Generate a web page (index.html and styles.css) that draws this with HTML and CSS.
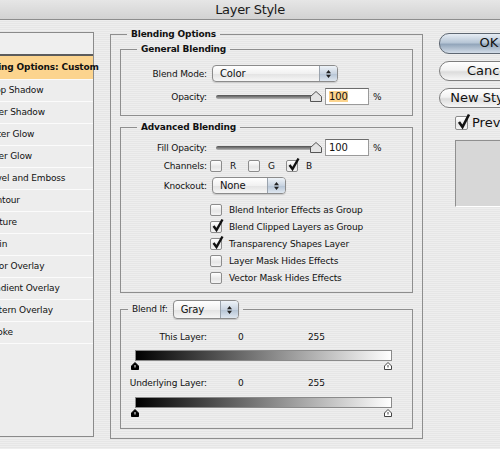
FILE: index.html
```html
<!DOCTYPE html>
<html lang="en">
<head>
    <meta charset="UTF-8">
    <meta name="viewport" content="width=device-width, initial-scale=1.0">
    <title>Layer Style</title>
    <link rel="stylesheet" href="styles.css">
</head>
<body>
    <div class="titlebar">Layer Style</div>
    <div class="dialog">
        <div class="styles-list">
            <div class="row head">Styles</div>
            <div class="row selected">Blending Options: Custom</div>
            <div class="row">Drop Shadow</div>
            <div class="row">Inner Shadow</div>
            <div class="row">Outer Glow</div>
            <div class="row">Inner Glow</div>
            <div class="row">Bevel and Emboss</div>
            <div class="row">Contour</div>
            <div class="row">Texture</div>
            <div class="row">Satin</div>
            <div class="row">Color Overlay</div>
            <div class="row">Gradient Overlay</div>
            <div class="row">Pattern Overlay</div>
            <div class="row">Stroke</div>
        </div>

        <fieldset class="group outer">
            <legend>Blending Options</legend>

            <fieldset class="group general">
                <legend>General Blending</legend>
                <div class="field">
                    <span class="label">Blend Mode:</span>
                    <div class="popup mode">
                        <span class="value">Color</span>
                        <span class="arrows"><svg width="7" height="10" viewBox="0 0 7 10"><path d="M1 4.2 L3.5 1 L6 4.2Z M1 5.8 L3.5 9 L6 5.8Z" fill="#222"/></svg></span>
                    </div>
                </div>
                <div class="field">
                    <span class="label">Opacity:</span>
                    <div class="slider">
                        <div class="track"></div>
                        <svg class="thumb" width="12" height="11" viewBox="0 0 12 11"><path d="M0.5 10.5 V5.5 L6 0.5 L11.5 5.5 V10.5 Z" fill="#e4e4e4" stroke="#555"/></svg>
                    </div>
                    <div class="numbox"><span class="hilite">100</span></div>
                    <span class="unit">%</span>
                </div>
            </fieldset>

            <fieldset class="group advanced">
                <legend>Advanced Blending</legend>
                <div class="field">
                    <span class="label">Fill Opacity:</span>
                    <div class="slider">
                        <div class="track"></div>
                        <svg class="thumb" width="12" height="11" viewBox="0 0 12 11"><path d="M0.5 10.5 V5.5 L6 0.5 L11.5 5.5 V10.5 Z" fill="#e4e4e4" stroke="#555"/></svg>
                    </div>
                    <div class="numbox">100</div>
                    <span class="unit">%</span>
                </div>
                <div class="field channels">
                    <span class="label">Channels:</span>
                    <span class="check"></span><span class="chan">R</span>
                    <span class="check"></span><span class="chan">G</span>
                    <span class="check on"><svg width="13" height="15" viewBox="0 0 13 15"><path d="M2.5 8 L5.5 12 L11.5 1.5" fill="none" stroke="#111" stroke-width="2.4"/></svg></span><span class="chan">B</span>
                </div>
                <div class="field">
                    <span class="label">Knockout:</span>
                    <div class="popup knockout">
                        <span class="value">None</span>
                        <span class="arrows"><svg width="7" height="10" viewBox="0 0 7 10"><path d="M1 4.2 L3.5 1 L6 4.2Z M1 5.8 L3.5 9 L6 5.8Z" fill="#222"/></svg></span>
                    </div>
                </div>
                <div class="options">
                    <div class="option"><span class="check"></span>Blend Interior Effects as Group</div>
                    <div class="option"><span class="check on"><svg width="13" height="15" viewBox="0 0 13 15"><path d="M2.5 8 L5.5 12 L11.5 1.5" fill="none" stroke="#111" stroke-width="2.4"/></svg></span>Blend Clipped Layers as Group</div>
                    <div class="option"><span class="check on"><svg width="13" height="15" viewBox="0 0 13 15"><path d="M2.5 8 L5.5 12 L11.5 1.5" fill="none" stroke="#111" stroke-width="2.4"/></svg></span>Transparency Shapes Layer</div>
                    <div class="option"><span class="check"></span>Layer Mask Hides Effects</div>
                    <div class="option"><span class="check"></span>Vector Mask Hides Effects</div>
                </div>
            </fieldset>

            <fieldset class="group blendif">
                <legend>
                    <span class="legend-label">Blend If:</span>
                    <div class="popup gray">
                        <span class="value">Gray</span>
                        <span class="arrows"><svg width="7" height="10" viewBox="0 0 7 10"><path d="M1 4.2 L3.5 1 L6 4.2Z M1 5.8 L3.5 9 L6 5.8Z" fill="#222"/></svg></span>
                    </div>
                </legend>
                <div class="range-head">
                    <span class="label">This Layer:</span>
                    <span class="lo">0</span>
                    <span class="hi">255</span>
                </div>
                <div class="ramp"></div>
                <div class="markers">
                    <svg width="8" height="8" viewBox="0 0 8 8"><path d="M0.5 7.5 V4 L4 0.5 L7.5 4 V7.5 Z" fill="#000" stroke="#000"/><path d="M4 3 V5.5" stroke="#fff"/></svg>
                    <svg width="10" height="8" viewBox="0 0 10 8"><path d="M1.5 7.5 V4 L5 0.5 L8.5 4 V7.5 Z" fill="#fff" stroke="#444"/><path d="M5 3 V5.5" stroke="#444"/></svg>
                </div>
                <div class="range-head second">
                    <span class="label">Underlying Layer:</span>
                    <span class="lo">0</span>
                    <span class="hi">255</span>
                </div>
                <div class="ramp lower"></div>
                <div class="markers">
                    <svg width="8" height="8" viewBox="0 0 8 8"><path d="M0.5 7.5 V4 L4 0.5 L7.5 4 V7.5 Z" fill="#000" stroke="#000"/><path d="M4 3 V5.5" stroke="#fff"/></svg>
                    <svg width="10" height="8" viewBox="0 0 10 8"><path d="M1.5 7.5 V4 L5 0.5 L8.5 4 V7.5 Z" fill="#fff" stroke="#444"/><path d="M5 3 V5.5" stroke="#444"/></svg>
                </div>
            </fieldset>
        </fieldset>

        <div class="actions">
            <div class="btn default">OK</div>
            <div class="btn">Cancel</div>
            <div class="btn">New Style...</div>
            <div class="preview-toggle">
                <span class="check big on"><svg width="15" height="17" viewBox="0 0 15 17"><path d="M3 9 L6.5 14 L13 1.5" fill="none" stroke="#111" stroke-width="2.6"/></svg></span>
                Preview
            </div>
            <div class="swatch"></div>
        </div>
    </div>
</body>
</html>
```

FILE: styles.css
```css
body {
    margin: 0px;
    width: 500px;
    height: 449px;
    overflow: hidden;
    font-family: "DejaVu Sans", sans-serif;
    font-size: 9px;
    letter-spacing: -0.15px;
    color: #111;
    background: repeating-linear-gradient(to bottom, #eeeeee 0px, #eeeeee 1px, #e6e6e6 1px, #e6e6e6 2px);
}
.titlebar {
    height: 19px;
    line-height: 19px;
    text-align: center;
    font-size: 13px;
    letter-spacing: -0.3px;
    color: #1a1a1a;
    background: linear-gradient(#e6e6e6, #d2d2d2);
    border-bottom: 1px solid #8d8d8d;
}
.dialog {
    display: flex;
    align-items: flex-start;
    padding-top: 9px;
}

/* left list of styles */
.styles-list {
    flex-shrink: 0;
    box-sizing: border-box;
    width: 134px;
    height: 405px;
    margin: 3px 0px 0px -40px;
    border: 1px solid #8a8a8a;
    background-color: #ededed;
}
.row {
    box-sizing: border-box;
    height: 22px;
    line-height: 21px;
    padding-left: 24px;
    border-bottom: 1px solid #fbfbfb;
    white-space: nowrap;
}
.row.head {
    height: 23px;
    color: transparent;
    background-color: #efefef;
    border-bottom: 2px solid #5c5c5c;
}
.row.selected {
    height: 24px;
    line-height: 23px;
    padding-left: 9px;
    font-weight: bold;
    background-color: #fcd48e;
}

/* fieldsets */
fieldset.group {
    margin: 0px;
    min-width: 0px;
    border: 1px solid #8e8e8e;
}
fieldset.group legend {
    padding: 0px 4px;
    line-height: 11px;
    font-weight: bold;
}
.outer {
    flex-shrink: 0;
    box-sizing: border-box;
    width: 313px;
    margin-left: 16px !important;
    padding: 4px 9px 9px;
}
.outer > legend {
    margin-left: 7px;
}
.general, .advanced {
    padding: 10px 0px 10px;
}
.general > legend, .advanced > legend {
    margin-left: 16px;
}
.general .field + .field {
    margin-top: 6px;
}
.advanced {
    margin-top: 6px !important;
    padding: 6px 0px 6px;
}
.field {
    display: flex;
    align-items: center;
    height: 17px;
}
.label {
    flex-shrink: 0;
    width: 86px;
    text-align: right;
    white-space: nowrap;
}

/* popup menus */
.popup {
    display: flex;
    box-sizing: border-box;
    height: 17px;
    margin-left: 5px;
    border: 1px solid #8b8b8b;
    border-radius: 4px;
    background: linear-gradient(#ffffff, #f1f1f1 50%, #e2e2e2 51%, #f6f6f6);
    box-shadow: 0px 1px 1px rgba(0, 0, 0, 0.15);
    overflow: hidden;
}
.popup .value {
    flex: 1;
    padding-left: 7px;
    line-height: 15px;
    font-size: 10px;
}
.popup .arrows {
    display: flex;
    align-items: center;
    justify-content: center;
    width: 17px;
    border-left: 1px solid #9aa3ad;
    background: linear-gradient(#eef3f8, #c9d4e1 50%, #b4c3d4 51%, #dfe7f0);
}
.popup.mode {
    width: 126px;
}
.popup.knockout {
    width: 74px;
}

/* sliders and number boxes */
.slider {
    position: relative;
    flex-shrink: 0;
    width: 106px;
    height: 17px;
    margin-left: 9px;
}
.track {
    position: absolute;
    left: 0px;
    right: 4px;
    top: 7px;
    height: 4px;
    border-radius: 2px;
    background: linear-gradient(#505050, #8a8a8a 60%, #b8b8b8);
}
.thumb {
    position: absolute;
    right: 0px;
    top: 3px;
}
.numbox {
    box-sizing: border-box;
    width: 44px;
    height: 17px;
    margin-left: 3px;
    padding-left: 3px;
    line-height: 15px;
    font-size: 10px;
    background-color: #ffffff;
    border: 1px solid #9a9a9a;
    border-top-color: #6c6c6c;
}
.hilite {
    background-color: #fcd48e;
}
.unit {
    margin-left: 4px;
}

/* checkboxes */
.check {
    position: relative;
    flex-shrink: 0;
    box-sizing: border-box;
    width: 12px;
    height: 12px;
    border: 1px solid #8c8c8c;
    border-radius: 2px;
    background: linear-gradient(#ffffff, #e6e6e6 60%, #f4f4f4);
}
.check svg {
    position: absolute;
    left: 0px;
    top: -4px;
}
.channels {
    height: 19px;
}
.channels .check {
    margin-left: 3px;
}
.chan {
    width: 23px;
    padding-left: 8px;
    box-sizing: border-box;
}
.advanced .field + .field {
    margin-top: 0px;
}
.advanced .field:nth-of-type(3) {
    margin-top: 2px;
}
.options {
    margin-top: 7px;
    padding-left: 89px;
}
.option {
    display: flex;
    align-items: center;
    height: 17px;
    white-space: nowrap;
}
.option .check {
    margin-right: 7px;
}

/* blend if */
.blendif {
    margin-top: 7px !important;
    padding: 12px 0px 11px;
}
.blendif > legend {
    display: flex;
    align-items: center;
    margin-left: 7px;
    font-weight: normal !important;
    line-height: 19px !important;
}
.popup.gray {
    width: 66px;
    height: 19px;
}
.popup.gray .value {
    line-height: 17px;
}
.range-head {
    display: flex;
    height: 12px;
    line-height: 12px;
}
.range-head .lo {
    margin-left: 31px;
    width: 70px;
}
.range-head.second {
    margin-top: 7px;
}
.ramp {
    box-sizing: border-box;
    width: 257px;
    height: 11px;
    margin: 7px 0px 0px 14px;
    border: 1px solid #8a8a8a;
    background: linear-gradient(to right, #000000, #ffffff);
}
.ramp.lower {
    margin-top: 8px;
}
.markers {
    display: flex;
    justify-content: space-between;
    width: 262px;
    height: 8px;
    margin: 1px 0px 0px 10px;
}

/* right column */
.actions {
    flex-shrink: 0;
    width: 110px;
    margin-left: 16px;
    padding-top: 4px;
}
.btn {
    box-sizing: border-box;
    width: 100px;
    height: 20px;
    margin-bottom: 7px;
    line-height: 18px;
    text-align: center;
    font-size: 13px;
    letter-spacing: 0px;
    border: 1px solid #7e7e7e;
    border-radius: 10px;
    background: linear-gradient(#ffffff, #f2f2f2 45%, #dcdcdc 55%, #f7f7f7);
}
.btn.default {
    height: 21px;
    border-color: #5e6772;
    background: linear-gradient(#e6edf4, #b7c6d6 45%, #93a6bb 55%, #d3dde8);
}
.preview-toggle {
    display: flex;
    align-items: center;
    height: 15px;
    margin-left: 16px;
    font-size: 13px;
    letter-spacing: 0px;
}
.check.big {
    width: 13px;
    height: 14px;
    margin-right: 4px;
}
.swatch {
    height: 65px;
    margin: 10px 0px 0px 16px;
    background-color: #d7d7d7;
    border-top: 1px solid #8f8f8f;
    border-left: 1px solid #8f8f8f;
    border-bottom: 1px solid #ffffff;
}
```
